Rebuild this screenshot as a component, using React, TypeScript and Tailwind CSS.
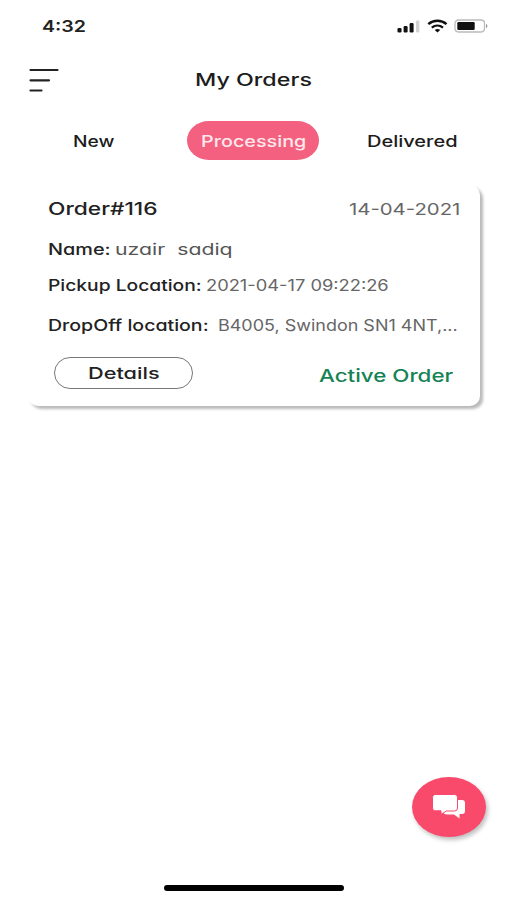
import { useLayoutEffect, useRef, useState } from 'react'
import type { ReactNode } from 'react'
import clsx from 'clsx'

interface WideTextProps {
  children: ReactNode
  width: number
  className?: string
}

// Extended lettering: stretches one line of text to the given width
function WideText({ children, width, className }: WideTextProps) {
  const ref = useRef<HTMLSpanElement>(null)
  const [scale, setScale] = useState(1)

  useLayoutEffect(() => {
    if (ref.current) setScale(width / ref.current.offsetWidth)
  }, [width, children])

  return (
    <span className="block shrink-0 text-left" style={{ width }}>
      <span
        ref={ref}
        className={clsx('inline-block origin-left whitespace-pre align-top leading-6', className)}
        style={{ transform: `scaleX(${scale})` }}
      >
        {children}
      </span>
    </span>
  )
}

function StatusBar() {
  return (
    <div className="flex h-[52px] items-center justify-between pl-[42px] pr-[19px]">
      <WideText width={44} className="text-[16px] font-semibold text-[#222]">4:32</WideText>
      <svg width="91" height="14" viewBox="0 0 91 14" fill="none">
        <rect x="0.5" y="9" width="4" height="4.4" rx="1.2" fill="#111" />
        <rect x="6.6" y="7" width="4" height="6.4" rx="1.2" fill="#111" />
        <rect x="12.6" y="4" width="4" height="9.4" rx="1.2" fill="#111" />
        <rect x="19" y="1.5" width="3.4" height="11.9" rx="1.2" fill="#d2d2d2" />
        <path d="M31.3 5.1c5.3-4.6 12.9-4.6 18.2 0" stroke="#111" strokeWidth="2.5" />
        <path d="M34.8 8.6c3.3-2.7 7.9-2.7 11.2 0" stroke="#111" strokeWidth="2.3" />
        <path d="M37.7 11c1.7-1.3 3.8-1.3 5.5 0l-2.75 2.6z" fill="#111" />
        <rect x="58" y="1" width="29.5" height="12" rx="3.4" stroke="#bbb" strokeWidth="1.3" />
        <rect x="60.3" y="3" width="17.4" height="8" rx="1.2" fill="#111" />
        <path d="M89 5c1.8.5 1.8 3.5 0 4z" fill="#999" />
      </svg>
    </div>
  )
}

function Header() {
  return (
    <div className="flex h-[56px] items-center pl-[29px]">
      <svg width="30" height="24" viewBox="0 0 30 24" stroke="#222" strokeWidth="2.2" strokeLinecap="round">
        <path d="M1.5 2h27M1.5 12.3h18.5M1.5 22.5h11" />
      </svg>
      <div className="ml-[136px]">
        <WideText width={117} className="text-[17.5px] font-medium text-[#1c1c1c]">My Orders</WideText>
      </div>
    </div>
  )
}

function Tabs() {
  return (
    <div className="mt-[13px] flex h-[39px] items-center pl-[73px]">
      <button className="text-[#1c1c1c]">
        <WideText width={42} className="text-[16px] font-medium">New</WideText>
      </button>
      <button className="ml-[72px] flex h-[39px] w-[132px] items-center justify-center rounded-[22px/19.5px] bg-[#f4607f] text-[#ffe9ed]">
        <WideText width={105} className="text-[16px] font-medium">Processing</WideText>
      </button>
      <button className="ml-[48px] text-[#1c1c1c]">
        <WideText width={90} className="text-[16px] font-medium">Delivered</WideText>
      </button>
    </div>
  )
}

function OrderCard() {
  return (
    <div className="ml-7 mt-[25px] h-[221px] w-[452px] rounded-[10px] bg-white pl-5 pr-5 pt-3 shadow-[3px_3px_3px_rgba(0,0,0,0.28)]">
      <div className="flex items-center justify-between">
        <WideText width={109} className="text-[17.5px] font-medium text-[#222]">Order#116</WideText>
        <WideText width={111} className="text-[16.5px] text-[#666]">14-04-2021</WideText>
      </div>
      <div className="mt-4 flex">
        <WideText width={62} className="text-[16px] font-medium text-[#222]">Name:</WideText>
        <div className="ml-[5px]">
          <WideText width={117} className="text-[16px] text-[#555]">{'uzair  sadiq'}</WideText>
        </div>
      </div>
      <div className="mt-3 flex">
        <WideText width={154} className="text-[16px] font-medium text-[#222]">Pickup Location:</WideText>
        <div className="ml-1 pt-px">
          <WideText width={183} className="text-[15.5px] text-[#666]">2021-04-17 09:22:26</WideText>
        </div>
      </div>
      <div className="mt-[15px] flex">
        <WideText width={160} className="text-[16px] font-medium text-[#222]">DropOff location:</WideText>
        <div className="ml-[10px] pt-px">
          <WideText width={240} className="text-[15.5px] text-[#666]">B4005, Swindon SN1 4NT,...</WideText>
        </div>
      </div>
      <div className="mt-[19px] flex justify-between pl-[6px] pr-[7px]">
        <button className="flex h-8 w-[139px] items-center justify-center rounded-full border border-[#777] pb-px">
          <WideText width={71} className="text-[16.5px] font-medium text-[#222]">Details</WideText>
        </button>
        <div className="pt-[7px]">
          <WideText width={134} className="text-[17.5px] font-medium text-[#168354]">Active Order</WideText>
        </div>
      </div>
    </div>
  )
}

function ChatButton() {
  return (
    <button className="flex h-[60px] w-[74px] items-center justify-center rounded-[50%] bg-[#f94a6c] shadow-[2px_3px_4px_rgba(0,0,0,0.25)]">
      <svg width="34" height="26" viewBox="0 0 34 26" fill="white">
        <path d="M24 6h6a3 3 0 0 1 3 3v8a3 3 0 0 1-3 3h-2.500v4.500L22 20.500h-7c-2 0-3.500-.8-4-2.500l11-4z" />
        <path
          d="M4 .5h18.500A3 3 0 0 1 25.500 3.500v10.500a3 3 0 0 1-3 3H14.500l-5.500 3.300V16.800H4A3 3 0 0 1 .5 14V3.500A3 3 0 0 1 4 .5z"
          stroke="#f94a6c"
        />
      </svg>
    </button>
  )
}

export default function App() {
  return (
    <div className="flex h-[900px] w-[507px] flex-col overflow-hidden bg-white font-['Inter','Liberation_Sans',sans-serif] [font-feature-settings:'cv11'_1]">
      <StatusBar />
      <Header />
      <Tabs />
      <OrderCard />
      <div className="mt-auto flex justify-end pr-[21px]">
        <ChatButton />
      </div>
      <div className="mb-[9px] ml-[164px] mt-[48px] h-[6px] w-[180px] rounded-full bg-black" />
    </div>
  )
}
